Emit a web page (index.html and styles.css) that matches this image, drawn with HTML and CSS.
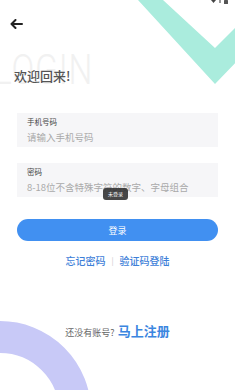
FILE: index.html
```html
<!DOCTYPE html>
<html lang="zh">
<head>
<meta charset="utf-8">
<title>登录</title>
<link rel="stylesheet" href="styles.css">
</head>
<body>
<div class="screen">
  <svg class="chevron" width="235" height="95" viewBox="0 0 235 95">
    <polygon points="138,0 163,0 215,48 238,25 238,60 215,84" fill="#aaecdd"/>
  </svg>
  <svg class="status" width="24" height="5" viewBox="0 0 24 5">
    <path d="M1 0 L6 0 L3.5 3 Z" fill="#444"/>
    <rect x="9" y="0" width="2" height="3" fill="#999"/>
    <rect x="14" y="0" width="4" height="4" rx="0.5" fill="#555"/>
  </svg>
  <div class="ring"></div>

  <header class="topbar">
    <svg class="back" width="13" height="10" viewBox="0 0 13 10">
      <path d="M12 5 H2 M5.5 1 L1.5 5 L5.5 9" fill="none" stroke="#222" stroke-width="2" stroke-linecap="round" stroke-linejoin="round"/>
    </svg>
  </header>

  <section class="hero">
    <div class="watermark">LOGIN</div>
    <h1 class="title">欢迎回来!</h1>
  </section>

  <form class="form">
    <div class="field">
      <div class="label">手机号码</div>
      <div class="placeholder">请输入手机号码</div>
    </div>
    <div class="field field-2">
      <div class="label">密码</div>
      <div class="placeholder">8-18位不含特殊字符的数字、字母组合</div>
    </div>
    <div class="btn">登录</div>
    <div class="links">
      <span class="link">忘记密码</span>
      <span class="sep">|</span>
      <span class="link">验证码登陆</span>
    </div>
  </form>

  <div class="register">
    <span class="ask">还没有账号?</span>
    <span class="reg">马上注册</span>
  </div>

  <div class="toast">未登录</div>
</div>
</body>
</html>
```

FILE: styles.css
```css
* { box-sizing: border-box; }
html, body { margin: 0; padding: 0; background: #fff; }
body {
  font-family: "Noto Sans CJK SC", "Noto Sans", sans-serif;
}
.screen {
  position: relative;
  width: 235px;
  height: 390px;
  overflow: hidden;
  background: #fff;
}
.chevron {
  position: absolute;
  left: 0;
  top: 0;
}
.status {
  position: absolute;
  right: 1px;
  top: 0;
}
.ring {
  position: absolute;
  left: -91px;
  top: 321px;
  width: 182px;
  height: 182px;
  border-radius: 50%;
  border: 32px solid #c8c9f7;
}
.topbar {
  position: relative;
  height: 48px;
  padding-left: 10px;
  display: flex;
  align-items: center;
}
.back { display: block; }
.hero {
  position: relative;
  padding-top: 20px;
  padding-left: 14px;
}
.watermark {
  position: absolute;
  left: -6px;
  top: 1px;
  font-family: "Roboto", "Liberation Sans", sans-serif;
  font-weight: 300;
  font-size: 42px;
  line-height: 42px;
  color: #f1f1f1;
  transform: scaleX(0.8);
  transform-origin: left top;
  letter-spacing: 1px;
}
.title {
  position: relative;
  margin: 0;
  font-size: 13px;
  line-height: 16px;
  font-weight: 500;
  color: #555;
}
.form {
  position: relative;
  margin: 29px 17px 0;
  display: flex;
  flex-direction: column;
}
.field {
  height: 34px;
  background: #f6f6f8;
  padding: 4px 10px 0;
  display: flex;
  flex-direction: column;
  gap: 4px;
}
.field-2 { margin-top: 16px; }
.label {
  font-size: 7.5px;
  line-height: 10px;
  color: #444;
}
.placeholder {
  font-size: 9.5px;
  line-height: 12px;
  color: #aaa;
  white-space: nowrap;
}
.btn {
  margin-top: 22px;
  height: 22px;
  border-radius: 11px;
  background: #4190f1;
  color: #fff;
  font-size: 9px;
  display: flex;
  align-items: center;
  justify-content: center;
}
.links {
  margin-top: 14px;
  display: flex;
  justify-content: center;
  align-items: center;
  gap: 6px;
  font-size: 10px;
  line-height: 12px;
}
.link { color: #3d80d8; font-weight: 500; }
.sep { color: #ccc; font-size: 8px; }
.register {
  position: relative;
  margin-top: 56px;
  display: flex;
  justify-content: center;
  align-items: baseline;
  gap: 3px;
  line-height: 16px;
}
.ask { font-size: 9px; color: #666; }
.reg { font-size: 13px; font-weight: 700; color: #3b86e0; }
.toast {
  position: absolute;
  left: 103px;
  top: 188px;
  width: 25px;
  height: 12px;
  border-radius: 3px;
  background: rgba(45, 45, 45, 0.88);
  color: #fff;
  font-size: 5px;
  line-height: 12px;
  text-align: center;
}
```
